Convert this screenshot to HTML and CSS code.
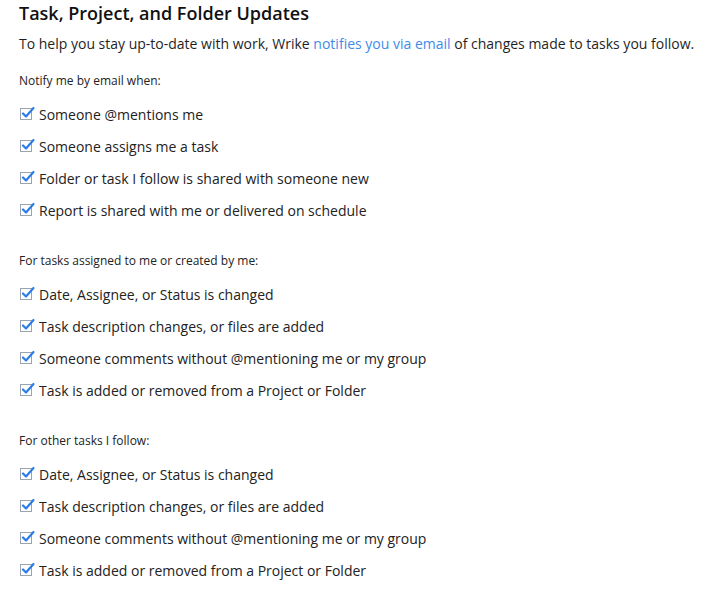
FILE: index.html
```html
<!DOCTYPE html>
<html>
<head>
<meta charset="utf-8">
<link rel="stylesheet" href="styles.css">
</head>
<body>
<div class="page">
  <h1 class="title">Task, Project, and Folder Updates</h1>
  <p class="intro">To help you stay up-to-date with work, Wrike <a class="link">notifies you via email</a> of changes made to tasks you follow.</p>

  <section class="group">
    <div class="label">Notify me by email when:</div>
    <ul class="list">
      <li class="item"><span class="cb"><svg viewBox="0 0 16 14" width="16" height="14"><rect x="0.5" y="2.5" width="11" height="11" fill="none" stroke="#9aa3ae" stroke-width="1"/><path d="M3 7.5 L6 10.5 L13.5 2" fill="none" stroke="#2b7de9" stroke-width="2.2" stroke-linecap="round" stroke-linejoin="round"/></svg></span>Someone @mentions me</li>
      <li class="item"><span class="cb"><svg viewBox="0 0 16 14" width="16" height="14"><rect x="0.5" y="2.5" width="11" height="11" fill="none" stroke="#9aa3ae" stroke-width="1"/><path d="M3 7.5 L6 10.5 L13.5 2" fill="none" stroke="#2b7de9" stroke-width="2.2" stroke-linecap="round" stroke-linejoin="round"/></svg></span>Someone assigns me a task</li>
      <li class="item"><span class="cb"><svg viewBox="0 0 16 14" width="16" height="14"><rect x="0.5" y="2.5" width="11" height="11" fill="none" stroke="#9aa3ae" stroke-width="1"/><path d="M3 7.5 L6 10.5 L13.5 2" fill="none" stroke="#2b7de9" stroke-width="2.2" stroke-linecap="round" stroke-linejoin="round"/></svg></span>Folder or task I follow is shared with someone new</li>
      <li class="item"><span class="cb"><svg viewBox="0 0 16 14" width="16" height="14"><rect x="0.5" y="2.5" width="11" height="11" fill="none" stroke="#9aa3ae" stroke-width="1"/><path d="M3 7.5 L6 10.5 L13.5 2" fill="none" stroke="#2b7de9" stroke-width="2.2" stroke-linecap="round" stroke-linejoin="round"/></svg></span>Report is shared with me or delivered on schedule</li>
    </ul>
  </section>

  <section class="group">
    <div class="label">For tasks assigned to me or created by me:</div>
    <ul class="list">
      <li class="item"><span class="cb"><svg viewBox="0 0 16 14" width="16" height="14"><rect x="0.5" y="2.5" width="11" height="11" fill="none" stroke="#9aa3ae" stroke-width="1"/><path d="M3 7.5 L6 10.5 L13.5 2" fill="none" stroke="#2b7de9" stroke-width="2.2" stroke-linecap="round" stroke-linejoin="round"/></svg></span>Date, Assignee, or Status is changed</li>
      <li class="item"><span class="cb"><svg viewBox="0 0 16 14" width="16" height="14"><rect x="0.5" y="2.5" width="11" height="11" fill="none" stroke="#9aa3ae" stroke-width="1"/><path d="M3 7.5 L6 10.5 L13.5 2" fill="none" stroke="#2b7de9" stroke-width="2.2" stroke-linecap="round" stroke-linejoin="round"/></svg></span>Task description changes, or files are added</li>
      <li class="item"><span class="cb"><svg viewBox="0 0 16 14" width="16" height="14"><rect x="0.5" y="2.5" width="11" height="11" fill="none" stroke="#9aa3ae" stroke-width="1"/><path d="M3 7.5 L6 10.5 L13.5 2" fill="none" stroke="#2b7de9" stroke-width="2.2" stroke-linecap="round" stroke-linejoin="round"/></svg></span>Someone comments without @mentioning me or my group</li>
      <li class="item"><span class="cb"><svg viewBox="0 0 16 14" width="16" height="14"><rect x="0.5" y="2.5" width="11" height="11" fill="none" stroke="#9aa3ae" stroke-width="1"/><path d="M3 7.5 L6 10.5 L13.5 2" fill="none" stroke="#2b7de9" stroke-width="2.2" stroke-linecap="round" stroke-linejoin="round"/></svg></span>Task is added or removed from a Project or Folder</li>
    </ul>
  </section>

  <section class="group">
    <div class="label">For other tasks I follow:</div>
    <ul class="list">
      <li class="item"><span class="cb"><svg viewBox="0 0 16 14" width="16" height="14"><rect x="0.5" y="2.5" width="11" height="11" fill="none" stroke="#9aa3ae" stroke-width="1"/><path d="M3 7.5 L6 10.5 L13.5 2" fill="none" stroke="#2b7de9" stroke-width="2.2" stroke-linecap="round" stroke-linejoin="round"/></svg></span>Date, Assignee, or Status is changed</li>
      <li class="item"><span class="cb"><svg viewBox="0 0 16 14" width="16" height="14"><rect x="0.5" y="2.5" width="11" height="11" fill="none" stroke="#9aa3ae" stroke-width="1"/><path d="M3 7.5 L6 10.5 L13.5 2" fill="none" stroke="#2b7de9" stroke-width="2.2" stroke-linecap="round" stroke-linejoin="round"/></svg></span>Task description changes, or files are added</li>
      <li class="item"><span class="cb"><svg viewBox="0 0 16 14" width="16" height="14"><rect x="0.5" y="2.5" width="11" height="11" fill="none" stroke="#9aa3ae" stroke-width="1"/><path d="M3 7.5 L6 10.5 L13.5 2" fill="none" stroke="#2b7de9" stroke-width="2.2" stroke-linecap="round" stroke-linejoin="round"/></svg></span>Someone comments without @mentioning me or my group</li>
      <li class="item"><span class="cb"><svg viewBox="0 0 16 14" width="16" height="14"><rect x="0.5" y="2.5" width="11" height="11" fill="none" stroke="#9aa3ae" stroke-width="1"/><path d="M3 7.5 L6 10.5 L13.5 2" fill="none" stroke="#2b7de9" stroke-width="2.2" stroke-linecap="round" stroke-linejoin="round"/></svg></span>Task is added or removed from a Project or Folder</li>
    </ul>
  </section>
</div>
</body>
</html>
```
FILE: styles.css
```css
html, body {
  margin: 0;
  padding: 0;
  background: #ffffff;
}
body {
  font-family: "Open Sans", "Liberation Sans", sans-serif;
  color: #1f1f1f;
}
.page {
  padding: 0 0 0 19px;
}
.title {
  margin: 0;
  padding-top: 1px;
  font-size: 18px;
  font-weight: 600;
  line-height: 24px;
  color: #111;
}
.intro {
  margin: 8px 0 0;
  font-size: 14px;
  line-height: 22px;
  color: #1f1f1f;
  white-space: nowrap;
}
.link {
  color: #3f8bea;
  text-decoration: none;
}
.group {
  margin-top: 16px;
}
.group + .group {
  margin-top: 25px;
}
.label {
  font-size: 12px;
  line-height: 20px;
  color: #222;
}
.list {
  list-style: none;
  margin: 7px 0 0;
  padding: 0;
}
.item {
  display: flex;
  align-items: center;
  height: 32px;
  font-size: 14px;
  color: #222;
}
.cb {
  display: inline-flex;
  width: 19px;
  margin-left: 1px;
  margin-top: -2px;
}
.cb svg {
  display: block;
}
```
